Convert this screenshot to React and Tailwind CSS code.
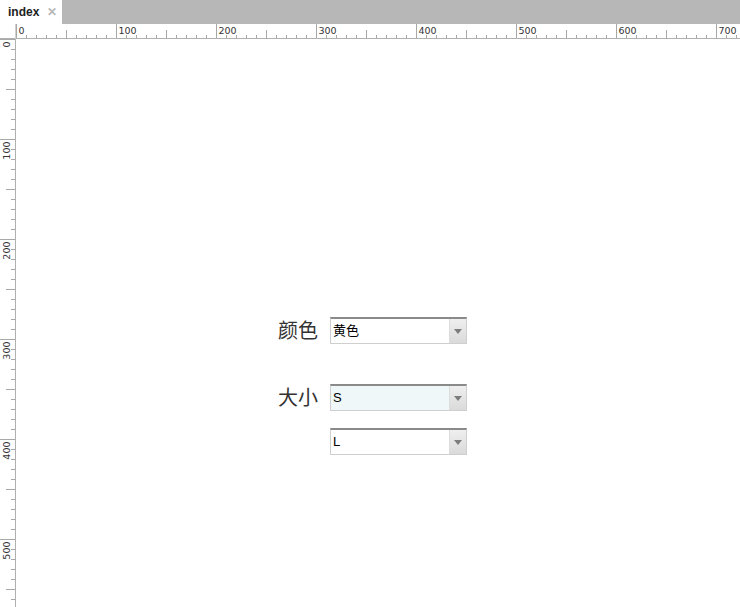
import React from "react";

const W = 740;
const H = 607;
const OX = 16;
const OY = 39;

function HRuler() {
  const ticks = [];
  const labels = [];
  for (let v = 0; OX + v < W; v += 10) {
    const x = OX + v + 0.5;
    let y1 = 11;
    if (v % 100 === 0) y1 = 0;
    else if (v % 50 === 0) y1 = 6;
    ticks.push(<line key={v} x1={x} y1={y1} x2={x} y2={14} stroke="#a8a8a8" strokeWidth="1" />);
    if (v % 100 === 0) {
      labels.push(
        <text key={"t" + v} x={x + 2} y={10} fill="#333" fontFamily="'DejaVu Sans', 'Liberation Sans', sans-serif" style={{ fontSize: 9.5 }}>
          {v}
        </text>
      );
    }
  }
  return (
    <svg width={W} height={15} className="block">
      <rect width={W} height={15} fill="#fff" />
      <line x1={0} y1={14.5} x2={W} y2={14.5} stroke="#b0b0b0" />
      <line x1={15.5} y1={0} x2={15.5} y2={15} stroke="#d0d0d0" />
      {ticks}
      {labels}
    </svg>
  );
}

function VRuler() {
  const h = H - OY;
  const ticks = [];
  const labels = [];
  for (let v = 0; v < h; v += 10) {
    const y = v + 0.5;
    let x1 = 11;
    if (v % 100 === 0) x1 = 0;
    else if (v % 50 === 0) x1 = 6;
    ticks.push(<line key={v} x1={x1} y1={y} x2={15} y2={y} stroke="#a8a8a8" strokeWidth="1" />);
    if (v % 100 === 0) {
      labels.push(
        <text
          key={"t" + v}
          x={0}
          y={0}
          textAnchor="end"
          transform={`translate(10 ${y + 2}) rotate(-90)`}
          fill="#333"
          fontFamily="'DejaVu Sans', 'Liberation Sans', sans-serif"
          style={{ fontSize: 9.5 }}
        >
          {v}
        </text>
      );
    }
  }
  return (
    <svg width={16} height={h} className="block shrink-0">
      <rect width={16} height={h} fill="#fff" />
      <line x1={15.5} y1={0} x2={15.5} y2={h} stroke="#b0b0b0" />
      {ticks}
      {labels}
    </svg>
  );
}

function FakeSelect({ value, tinted }) {
  return (
    <div
      className={
        "flex h-[27px] w-[137px] border border-[#cfcfcf] border-t-2 border-t-[#8a8a8a] " +
        (tinted ? "bg-[#eff7f9]" : "bg-white")
      }
    >
      <div className="flex flex-1 items-center pl-[2px] text-[13px] text-black">{value}</div>
      <div className="flex w-[17px] items-center justify-center border-l border-[#dcdcdc] bg-gradient-to-b from-[#efefef] to-[#dadada]">
        <svg width="8" height="5" viewBox="0 0 8 5">
          <path d="M0 0H8L4 5Z" fill="#7d7d7d" />
        </svg>
      </div>
    </div>
  );
}

export default function App() {
  return (
    <div
      className="h-[607px] w-[740px] overflow-hidden bg-white"
      style={{ fontFamily: "'Liberation Sans', 'Noto Sans CJK SC', sans-serif" }}
    >
      {/* tab bar */}
      <div className="flex h-[24px] bg-[#b7b7b7]">
        <div className="flex w-[62px] items-center bg-white pl-[8px]">
          <span className="text-[12px] font-bold text-[#222]">index</span>
          <span className="ml-[8px] text-[12px] font-bold text-[#b8b8b8]">✕</span>
        </div>
      </div>

      <HRuler />

      <div className="flex">
        <VRuler />

        {/* canvas */}
        <div className="flex-1 pl-[262px] pt-[278px]">
          <div className="flex items-center">
            <div className="w-[52px] pr-[12px] text-right text-[20px] leading-none text-[#333]">颜色</div>
            <FakeSelect value="黄色" />
          </div>

          <div className="mt-[40px] flex items-center">
            <div className="w-[52px] pr-[12px] text-right text-[20px] leading-none text-[#333]">大小</div>
            <FakeSelect value="S" tinted />
          </div>

          <div className="mt-[17px] flex items-center">
            <div className="w-[52px]" />
            <FakeSelect value="L" />
          </div>
        </div>
      </div>
    </div>
  );
}
